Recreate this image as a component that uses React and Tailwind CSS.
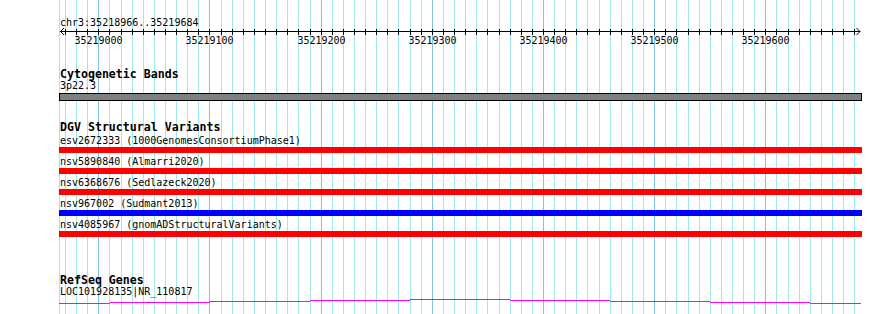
import React from "react";

// pixel position of a base pair on the 890px panel
const bpToX = (bp) => 98.3 + (bp - 35219000) * 1.1117;

const gridBps = Array.from({ length: 72 }, (_, i) => 35218970 + i * 10);
const majorBps = [35219000, 35219100, 35219200, 35219300, 35219400, 35219500, 35219600];

const variants = [
  { label: "esv2672333 (1000GenomesConsortiumPhase1)", color: "bg-[#ff0000]" },
  { label: "nsv5890840 (Almarri2020)", color: "bg-[#ff0000]" },
  { label: "nsv6368676 (Sedlazeck2020)", color: "bg-[#ff0000]" },
  { label: "nsv967002 (Sudmant2013)", color: "bg-[#0000ff]" },
  { label: "nsv4085967 (gnomADStructuralVariants)", color: "bg-[#ff0000]" },
];

// staircase segments of the gene line: [x1, x2, y]
const geneSegments = [
  [59, 110, 5.5],
  [110, 210, 4.5],
  [210, 310, 3.5],
  [310, 410, 2.5],
  [410, 510, 1.5],
  [510, 610, 2.5],
  [610, 710, 3.5],
  [710, 810, 4.5],
  [810, 861, 5.5],
];

const mono = "font-['DejaVu_Sans_Mono','Liberation_Mono',monospace]";

const GridLines = () => (
  <svg className="absolute inset-0" width="890" height="314" shapeRendering="crispEdges">
    <line x1="59.5" y1="0" x2="59.5" y2="314" stroke="#9fe8ee" strokeWidth="1" />
    {gridBps.map((bp) => {
      const x = Math.round(bpToX(bp)) + 0.5;
      const major = bp % 100 === 0;
      return (
        <line
          key={bp}
          x1={x}
          y1="0"
          x2={x}
          y2="314"
          stroke={major ? "#84c2e6" : "#9fe8ee"}
          strokeWidth="1"
        />
      );
    })}
  </svg>
);

const Ruler = () => (
  <svg width="890" height="48" className="block">
    <text x="60" y="25.5" fontFamily="DejaVu Sans Mono, monospace" fontSize="10" fill="#000">
      chr3:35218966..35219684
    </text>
    <g shapeRendering="crispEdges">
      <line x1="60" y1="31.5" x2="860" y2="31.5" stroke="#000" strokeWidth="1" />
      {gridBps.map((bp) => {
        const x = Math.round(bpToX(bp)) + 0.5;
        return <line key={bp} x1={x} y1="29" x2={x} y2="35" stroke="#000" strokeWidth="1" />;
      })}
    </g>
    <polyline points="64,28 60.5,31.5 64,35" fill="none" stroke="#000" strokeWidth="1" />
    <polyline points="856.5,28 860,31.5 856.5,35" fill="none" stroke="#000" strokeWidth="1" />
    {majorBps.map((bp) => (
      <text
        key={bp}
        x={Math.round(bpToX(bp)) + 0.5}
        y="44"
        textAnchor="middle"
        fontFamily="DejaVu Sans Mono, monospace"
        fontSize="10"
        fill="#000"
      >
        {bp}
      </text>
    ))}
  </svg>
);

const TrackTitle = ({ children, className = "" }) => (
  <div className={`${mono} pl-[60px] text-[11.6px] leading-[12px] font-bold text-black ${className}`}>
    {children}
  </div>
);

const Label = ({ children }) => (
  <div className={`${mono} pl-[60px] text-[10px] leading-[12px] text-black whitespace-pre`}>
    {children}
  </div>
);

export default function App() {
  return (
    <div className="relative w-[890px] h-[314px] bg-white overflow-hidden">
      <GridLines />
      <div className="relative">
        <Ruler />

        <TrackTitle className="mt-[20px]">Cytogenetic Bands</TrackTitle>
        <Label>3p22.3</Label>
        <div className="mt-px ml-[59px] w-[803px] h-[8px] border border-black bg-[#808080]" />

        <TrackTitle className="mt-[20px]">DGV Structural Variants</TrackTitle>
        <div className="mt-[2px] flex flex-col gap-[3px]">
          {variants.map((v) => (
            <div key={v.label}>
              <Label>{v.label}</Label>
              <div className={`ml-[59px] w-[803px] h-[6px] ${v.color}`} />
            </div>
          ))}
        </div>

        <TrackTitle className="mt-[37px]">RefSeq Genes</TrackTitle>
        <Label>LOC101928135|NR_110817</Label>
        <svg width="890" height="8" className="block" shapeRendering="crispEdges">
          {geneSegments.map(([x1, x2, y]) => (
            <line key={x1} x1={x1} y1={y} x2={x2} y2={y} stroke="#ff00ff" strokeWidth="1" />
          ))}
        </svg>
      </div>
    </div>
  );
}
